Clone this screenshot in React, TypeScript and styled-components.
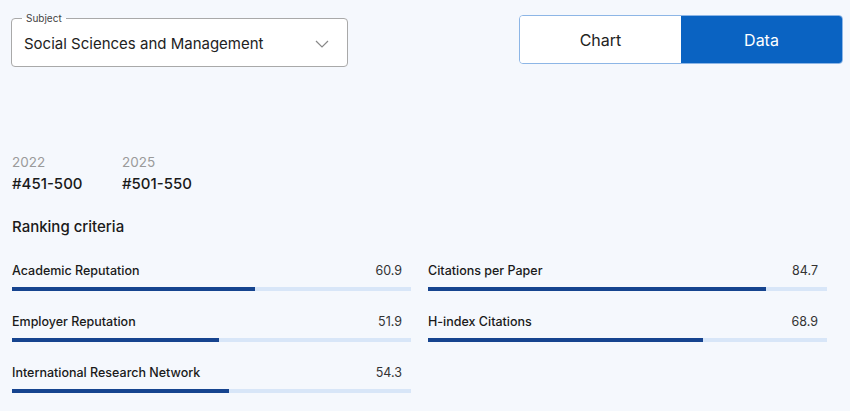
import React, { useState } from "react";
import styled, { createGlobalStyle } from "styled-components";

const GlobalStyle = createGlobalStyle`
  body {
    margin: 0;
    background: #f5f8fd;
    font-family: Inter, "Noto Sans", sans-serif;
    color: #1a1a1a;
  }
`;

const Page = styled.div`
  width: 850px;
  height: 411px;
  padding: 0 7px 0 11px;
  box-sizing: border-box;
  overflow: hidden;
`;

const TopRow = styled.div`
  display: flex;
  justify-content: space-between;
  align-items: flex-start;
`;

const SelectBox = styled.div`
  position: relative;
  display: flex;
  align-items: center;
  justify-content: space-between;
  width: 337px;
  height: 49px;
  margin-top: 18px;
  padding: 0 18px 0 12px;
  box-sizing: border-box;

  background: #ffffff;
  border: 1px solid #a9a9a9;
  border-radius: 4px;
`;

const SelectLabel = styled.span`
  position: absolute;
  top: -7px;
  left: 10px;
  padding: 0 4px;

  font-size: 10px;
  line-height: 12px;
  color: #444;
  background: linear-gradient(to bottom, #f5f8fd 50%, #ffffff 50%);
`;

const SelectValue = styled.span`
  font-size: 15px;
  color: #222;
  padding-top: 1px;
`;

const Chevron = styled.svg`
  width: 14px;
  height: 8px;
  margin-top: 3px;
  stroke: #888;
  fill: none;
  stroke-width: 1.2;
`;

const Toggle = styled.div`
  display: flex;
  width: 324px;
  height: 49px;
  margin-top: 15px;

  border: 1px solid #8db6e6;
  border-radius: 4px;
  box-sizing: border-box;
  overflow: hidden;
`;

const ToggleButton = styled.button<{ $active?: boolean }>`
  flex: 1;
  border: none;
  margin: 0;
  padding: 0;

  font-family: inherit;
  font-size: 16px;
  color: ${p => (p.$active ? "#ffffff" : "#222")};
  background: ${p => (p.$active ? "#0a63c2" : "#ffffff")};
  cursor: pointer;
`;

const Years = styled.div`
  display: flex;
  margin-top: 85px;
  padding-left: 1px;
`;

const YearCol = styled.div`
  width: 110px;
`;

const YearLabel = styled.div`
  font-size: 13.5px;
  line-height: 20px;
  color: #9a9a9a;
`;

const Rank = styled.div`
  font-size: 15px;
  line-height: 22px;
  margin-top: 1px;
  font-weight: 500;
  color: #1a1a1a;
`;

const Heading = styled.div`
  margin-top: 21px;
  padding-left: 1px;

  font-size: 15px;
  font-weight: 500;
  line-height: 22px;
`;

const Grid = styled.div`
  display: grid;
  grid-template-columns: 399px 399px;
  column-gap: 17px;
  row-gap: 23px;
  margin-top: 25px;
  padding-left: 1px;
`;

const Criterion = styled.div`
  display: flex;
  flex-direction: column;
`;

const CriterionHead = styled.div`
  display: flex;
  justify-content: space-between;
  font-size: 12.5px;
  line-height: 16px;
`;

const CriterionName = styled.span`
  font-weight: 500;
  color: #1a1a1a;
`;

const CriterionValue = styled.span`
  color: #333;
  padding-right: 9px;
`;

const Track = styled.div`
  height: 4px;
  margin-top: 8px;
  background: #d8e6f8;
`;

const Fill = styled.div`
  height: 100%;
  background: #16448f;
`;

const criteria = [
  { name: "Academic Reputation", value: 60.9 },
  { name: "Citations per Paper", value: 84.7 },
  { name: "Employer Reputation", value: 51.9 },
  { name: "H-index Citations", value: 68.9 },
  { name: "International Research Network", value: 54.3 },
];

export default function App() {
  const [mode, setMode] = useState<"chart" | "data">("data");

  return (
    <Page>
      <GlobalStyle />
      <TopRow>
        <SelectBox>
          <SelectLabel>Subject</SelectLabel>
          <SelectValue>Social Sciences and Management</SelectValue>
          <Chevron viewBox="0 0 14 8">
            <path d="M1 1 L7 7 L13 1" />
          </Chevron>
        </SelectBox>
        <Toggle>
          <ToggleButton $active={mode === "chart"} onClick={() => setMode("chart")}>
            Chart
          </ToggleButton>
          <ToggleButton $active={mode === "data"} onClick={() => setMode("data")}>
            Data
          </ToggleButton>
        </Toggle>
      </TopRow>

      <Years>
        <YearCol>
          <YearLabel>2022</YearLabel>
          <Rank>#451-500</Rank>
        </YearCol>
        <YearCol>
          <YearLabel>2025</YearLabel>
          <Rank>#501-550</Rank>
        </YearCol>
      </Years>

      <Heading>Ranking criteria</Heading>

      <Grid>
        {criteria.map(c => (
          <Criterion key={c.name}>
            <CriterionHead>
              <CriterionName>{c.name}</CriterionName>
              <CriterionValue>{c.value}</CriterionValue>
            </CriterionHead>
            <Track>
              <Fill style={{ width: `${c.value}%` }} />
            </Track>
          </Criterion>
        ))}
      </Grid>
    </Page>
  );
}
